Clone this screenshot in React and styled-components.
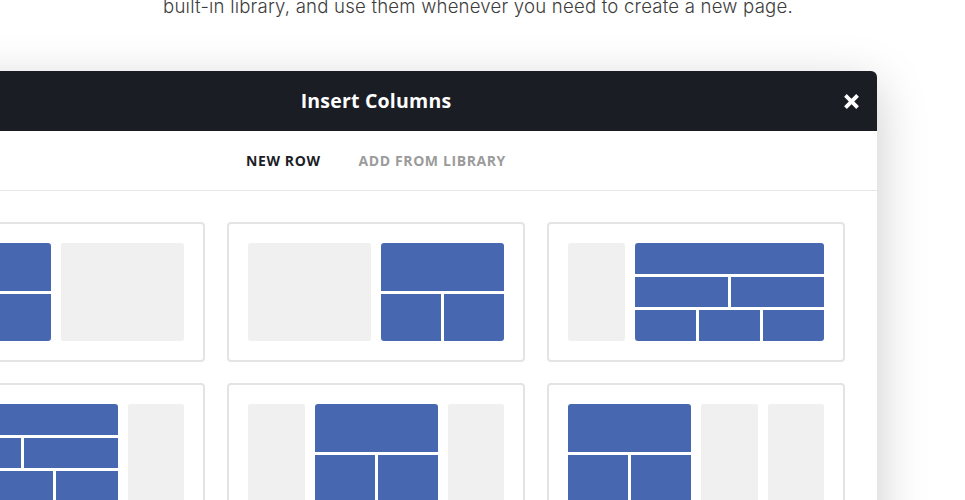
import React from "react";
import styled, { createGlobalStyle } from "styled-components";

const GlobalStyle = createGlobalStyle`
  html, body { margin: 0; padding: 0; background: #ffffff; overflow: hidden; }
  #root { width: 965px; height: 500px; overflow: hidden; }
`;

const Page = styled.div`
  width: 965px;
  height: 500px;
  overflow: hidden;
  display: flex;
  flex-direction: column;
`;

const Intro = styled.p`
  margin: -8px 0 0;
  padding-right: 9px;
  text-align: center;
  font-family: "Inter", "Liberation Sans", sans-serif;
  font-weight: 300;
  font-size: 18.6px;
  line-height: 28px;
  letter-spacing: 0.2px;
  color: #3d3d3d;
`;

const Modal = styled.div`
  margin: 51px 0 0 -125px;
  width: 1002px;
  flex-shrink: 0;
  background: #ffffff;
  border-radius: 6px 6px 0 0;
  box-shadow: 0 14px 50px rgba(0, 0, 0, 0.21);
`;

const Header = styled.div`
  height: 60px;
  background: #1b1d25;
  border-radius: 6px 6px 0 0;
  display: grid;
  grid-template-columns: 1fr auto 1fr;
  align-items: center;
`;

const Title = styled.h2`
  grid-column: 2;
  margin: 0 0 2px;
  font-family: "Open Sans", "Liberation Sans", sans-serif;
  font-weight: 700;
  font-size: 19.5px;
  color: #ffffff;
  letter-spacing: 0.2px;
`;

const Close = styled.button`
  grid-column: 3;
  justify-self: end;
  margin-right: 18px;
  width: 16px;
  height: 16px;
  padding: 0;
  border: 0;
  background: transparent;
  display: flex;
  align-items: center;
  justify-content: center;
  cursor: pointer;
`;

const Tabs = styled.div`
  height: 59px;
  border-bottom: 1px solid #e6e6e6;
  display: flex;
  justify-content: center;
  align-items: center;
  gap: 38px;
`;

const Tab = styled.span`
  font-family: "Open Sans", "Liberation Sans", sans-serif;
  font-weight: 700;
  font-size: 14px;
  letter-spacing: 0.6px;
  color: ${(p) => (p.$active ? "#1c1e26" : "#9b9b9b")};
`;

const Body = styled.div`
  padding: 31px 32px;
  display: grid;
  grid-template-columns: repeat(3, 298px);
  column-gap: 22px;
  row-gap: 21px;
`;

const Card = styled.div`
  height: 140px;
  box-sizing: border-box;
  border: 2px solid #e4e4e4;
  border-radius: 4px;
  padding: 19px;
  display: grid;
  grid-template-columns: repeat(4, 1fr);
  column-gap: 10px;
`;

const Empty = styled.div`
  grid-column: span ${(p) => p.$span};
  background: #f0f0f0;
  border-radius: 2px;
`;

const Filled = styled.div`
  grid-column: span ${(p) => p.$span};
  display: flex;
  flex-direction: column;
  gap: 3px;
  border-radius: 3px;
  overflow: hidden;
`;

const BlockRow = styled.div`
  flex: 1;
  display: flex;
  gap: 3px;
`;

const Cell = styled.div`
  flex: 1;
  background: #4768b0;
`;

const layouts = [
  [{ span: 2, rows: [1, 1] }, { span: 2 }],
  [{ span: 2 }, { span: 2, rows: [1, 2] }],
  [{ span: 1 }, { span: 3, rows: [1, 2, 3] }],
  [{ span: 3, rows: [1, 2, 3] }, { span: 1 }],
  [{ span: 1 }, { span: 2, rows: [1, 2] }, { span: 1 }],
  [{ span: 2, rows: [1, 2] }, { span: 1 }, { span: 1 }],
];

function CloseIcon() {
  return (
    <svg width="15" height="15" viewBox="0 0 15 15">
      <path d="M2.8 2.8 L12.2 12.2 M12.2 2.8 L2.8 12.2" stroke="#ffffff" strokeWidth="3.8" strokeLinecap="square" />
    </svg>
  );
}

export default function App() {
  return (
    <>
      <GlobalStyle />
      <Page>
        <Intro>built-in library, and use them whenever you need to create a new page.</Intro>
        <Modal>
          <Header>
            <Title>Insert Columns</Title>
            <Close aria-label="Close">
              <CloseIcon />
            </Close>
          </Header>
          <Tabs>
            <Tab $active>NEW ROW</Tab>
            <Tab>ADD FROM LIBRARY</Tab>
          </Tabs>
          <Body>
            {layouts.map((cols, i) => (
              <Card key={i}>
                {cols.map((c, j) =>
                  c.rows ? (
                    <Filled key={j} $span={c.span}>
                      {c.rows.map((n, k) => (
                        <BlockRow key={k}>
                          {Array.from({ length: n }).map((_, m) => (
                            <Cell key={m} />
                          ))}
                        </BlockRow>
                      ))}
                    </Filled>
                  ) : (
                    <Empty key={j} $span={c.span} />
                  )
                )}
              </Card>
            ))}
          </Body>
        </Modal>
      </Page>
    </>
  );
}
